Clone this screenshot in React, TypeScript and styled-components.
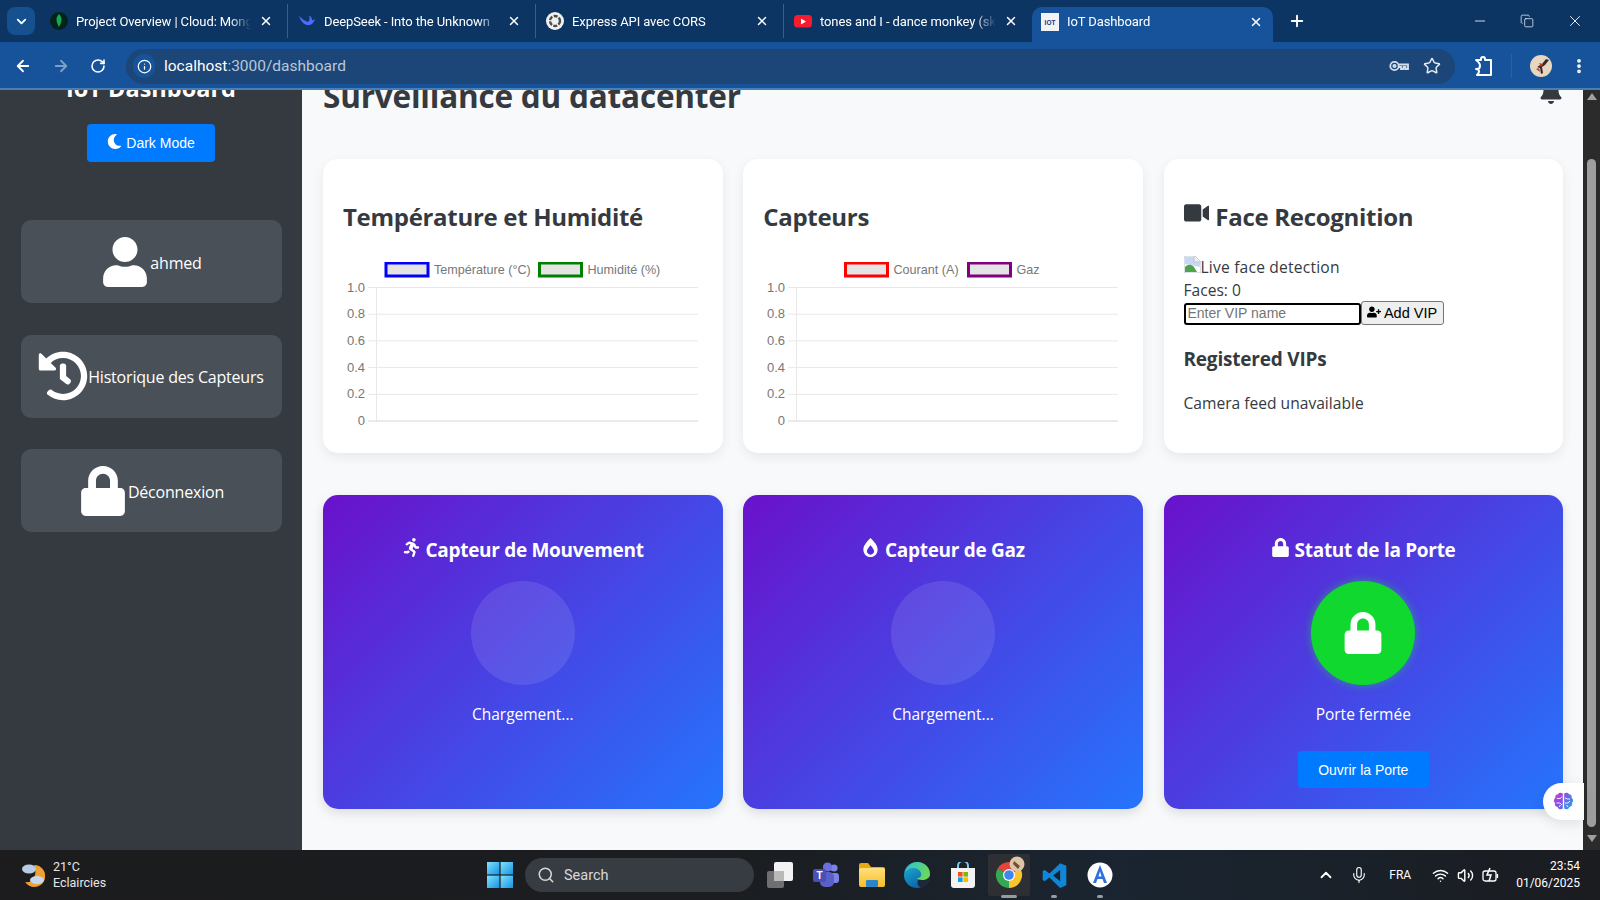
import React from "react";
import styled, { createGlobalStyle } from "styled-components";
import { FaBell, FaBurn, FaHistory, FaLock, FaMoon, FaRunning, FaUser, FaUserPlus, FaVideo } from "react-icons/fa";
import {
    ArrowLeft,
    ArrowRight,
    ChevronDown,
    ChevronUp,
    Copy,
    Info,
    Mic,
    Minus,
    MoreVertical,
    Plus,
    RotateCw,
    Search,
    Star,
    Volume2,
    Wifi,
    X,
} from "lucide-react";

const uiFont = `"Open Sans", "Noto Sans", sans-serif`;
const chromeFont = `Roboto, "Noto Sans", sans-serif`;
const arial = `"Liberation Sans", Arial, sans-serif`;

const GlobalStyle = createGlobalStyle`
    html, body {
        margin: 0;
        height: 100%;
        overflow: hidden;
        background: #f8f9fa;
    }
    * {
        box-sizing: border-box;
    }
`;

const Screen = styled.div`
    width: 1600px;
    height: 900px;
    display: flex;
    flex-direction: column;
    overflow: hidden;
`;

/* browser chrome */
const TabStrip = styled.div`
    height: 42px;
    background: #0c3563;
    display: flex;
    align-items: flex-end;
    padding-left: 7px;
    color: #fff;
    font-family: ${chromeFont};
    font-size: 13px;
`;
const TabMenu = styled.div`
    width: 28px;
    height: 28px;
    margin: 0 5px 7px 0;
    border-radius: 8px;
    background: #16508f;
    display: flex;
    align-items: center;
    justify-content: center;
`;
const Tab = styled.div<{ $active?: boolean; $divider?: boolean }>`
    width: ${(p) => (p.$active ? "241px" : "248px")};
    height: ${(p) => (p.$active ? "35px" : "34px")};
    padding: ${(p) => (p.$active ? "0 10px 6px 9px" : "0 14px 0 10px")};
    margin-bottom: ${(p) => (p.$active ? "0" : "4px")};
    display: flex;
    align-items: center;
    gap: 8px;
    background: ${(p) => (p.$active ? "#16539b" : "transparent")};
    border-radius: ${(p) => (p.$active ? "10px 10px 0 0" : "0")};
    border-right: ${(p) => (p.$divider ? "1px solid #3a5f8c" : "none")};
`;
const TabIcon = styled.span`
    width: 18px;
    height: 18px;
    flex: none;
    display: flex;
`;
const TabTitle = styled.span`
    flex: 1;
    min-width: 0;
    white-space: nowrap;
    overflow: hidden;
    letter-spacing: -0.1px;
    mask-image: linear-gradient(90deg, #000 88%, transparent);
`;
const NewTab = styled.div`
    margin: 0 0 12px 15px;
    display: flex;
`;
const WindowControls = styled.div`
    margin-left: auto;
    align-self: center;
    display: flex;
    align-items: center;
    gap: 32px;
    padding-right: 16px;
`;
const Toolbar = styled.div`
    height: 48px;
    background: #16539b;
    border-bottom: 2px solid #4a7fb5;
    display: flex;
    align-items: center;
    padding: 2px 12px 0 14px;
    color: #fff;
`;
const NavButtons = styled.div`
    display: flex;
    align-items: center;
    gap: 20px;
    width: 112px;
`;
const Omnibox = styled.div`
    width: 1329px;
    height: 35px;
    background: #1c4677;
    border-radius: 18px;
    display: flex;
    align-items: center;
    padding: 0 14px 0 7px;
    font-family: ${chromeFont};
    font-size: 15.5px;
`;
const SiteInfo = styled.span`
    width: 22px;
    height: 24px;
    border-radius: 12px;
    background: #16539b;
    display: flex;
    align-items: center;
    justify-content: center;
    margin-right: 9px;
`;
const Host = styled.span`
    color: #fff;
`;
const UrlPath = styled.span`
    color: #b9c8da;
`;
const OmniActions = styled.div`
    margin-left: auto;
    display: flex;
    align-items: center;
    gap: 14px;
`;
const ToolbarEnd = styled.div`
    flex: 1;
    display: flex;
    align-items: center;
    justify-content: space-between;
    padding: 0 0 0 20px;
`;
const ToolDivider = styled.span`
    width: 1px;
    height: 24px;
    background: #2b6199;
`;

/* page */
const Viewport = styled.div`
    flex: 1;
    min-height: 0;
    display: flex;
    position: relative;
    overflow: hidden;
`;
const Sidebar = styled.aside`
    width: 302px;
    flex: none;
    background: #343a40;
    color: #fff;
    padding: 0 20px;
    display: flex;
    flex-direction: column;
    align-items: center;
`;
const Brand = styled.h2`
    margin: -19px 0 19px;
    height: 34px;
    font-family: ${uiFont};
    font-size: 23.5px;
    font-weight: 700;
    line-height: 34px;
    white-space: nowrap;
`;
const ModeButton = styled.button`
    width: 128px;
    height: 38px;
    border: 0;
    border-radius: 4px;
    background: #007bff;
    color: #fff;
    font-family: ${arial};
    font-size: 14px;
    display: flex;
    align-items: center;
    justify-content: center;
    gap: 4px;
    margin-bottom: 58px;
    svg {
        margin-bottom: 3px;
    }
`;
const NavList = styled.nav`
    width: 261px;
    display: flex;
    flex-direction: column;
    gap: 31.5px;
`;
const NavItem = styled.div`
    height: 83px;
    background: #495057;
    border-radius: 10px;
    display: flex;
    align-items: center;
    justify-content: center;
    font-family: ${uiFont};
    font-size: 16px;
    white-space: nowrap;
    letter-spacing: -0.2px;
`;
const NavLabel = styled.span`
    margin-top: 2px;
`;
const Main = styled.main`
    flex: 1;
    min-width: 0;
    padding: 0 20px 0 21px;
`;
const PageHeader = styled.header`
    height: 69px;
    display: flex;
    justify-content: space-between;
    color: #343a40;
`;
const PageTitle = styled.h1`
    margin: -16px 0 0;
    font-family: ${uiFont};
    font-size: 31.5px;
    line-height: 44px;
    font-weight: 700;
    height: 44px;
    letter-spacing: -0.2px;
`;
const BellSlot = styled.div`
    margin-top: -10px;
    font-size: 24px;
    line-height: 1;
    height: 24px;
`;
const CardGrid = styled.div`
    display: grid;
    grid-template-columns: repeat(3, 399.5px);
    column-gap: 20.75px;
    row-gap: 42px;
`;
const Card = styled.section`
    height: 294px;
    background: #fff;
    border-radius: 15px;
    padding: 20px;
    box-shadow: 0 4px 12px rgba(0, 0, 0, 0.07);
    color: #343a40;
    font-family: ${uiFont};
`;
const CardTitle = styled.h3`
    height: 29px;
    margin: 23px 0 22px;
    font-size: 24px;
    line-height: 29px;
    font-weight: 700;
    letter-spacing: -0.3px;
    white-space: nowrap;
    svg {
        width: 1.08em;
        height: 1.08em;
        margin-top: -6px;
    }
`;
const ChartFrame = styled.svg`
    display: block;
    margin-top: 31px;
    margin-left: 0.5px;
`;
const BrokenLine = styled.div`
    height: 23px;
    margin-top: 24.5px;
    line-height: 23px;
    font-size: 15.6px;
    display: flex;
    align-items: flex-start;
    letter-spacing: 0.2px;
`;
const StatLine = styled.div`
    height: 22px;
    line-height: 22px;
    font-size: 15.6px;
`;
const VipForm = styled.div`
    display: flex;
    align-items: flex-end;
    height: 24px;
`;
const VipInput = styled.input`
    width: 177px;
    height: 22px;
    border: 2px solid #000;
    border-radius: 3px;
    padding: 0 2px 2px;
    font-family: ${arial};
    font-size: 14px;
    background: #fff;
    &::placeholder {
        color: #757575;
    }
`;
const VipButton = styled.button`
    width: 83px;
    height: 24px;
    padding: 0;
    border: 1px solid #767676;
    border-radius: 3px;
    background: #efefef;
    color: #000;
    font-family: ${arial};
    font-size: 14.5px;
    display: flex;
    align-items: center;
    justify-content: center;
    gap: 3px;
    svg {
        margin-bottom: 2px;
    }
`;
const VipTitle = styled.h4`
    margin: 22px 0 21px;
    font-size: 19px;
    line-height: 24px;
    font-weight: 700;
    letter-spacing: -0.2px;
`;
const FeedNote = styled.p`
    margin: 0;
    font-size: 15.6px;
    line-height: 22px;
`;
const SensorCard = styled.section`
    height: 314px;
    border-radius: 15px;
    padding: 43px 20px 0;
    background: linear-gradient(135deg, #6a11cb 0%, #2575fc 100%);
    box-shadow: 0 4px 12px rgba(0, 0, 0, 0.12);
    color: #fff;
    font-family: ${uiFont};
    display: flex;
    flex-direction: column;
    align-items: center;
`;
const SensorTitle = styled.h3`
    margin: 0;
    font-size: 19px;
    line-height: 24px;
    font-weight: 700;
    letter-spacing: -0.3px;
    white-space: nowrap;
`;
const SensorDot = styled.div<{ $on?: boolean }>`
    width: 104px;
    height: 104px;
    margin-top: 19px;
    border-radius: 50%;
    display: flex;
    align-items: center;
    justify-content: center;
    font-size: 42px;
    background: ${(p) => (p.$on ? "#10d82e" : "rgba(255, 255, 255, 0.1)")};
    box-shadow: ${(p) => (p.$on ? "0 0 8px rgba(40, 220, 70, 0.5)" : "none")};
`;
const SensorState = styled.div`
    margin-top: 17px;
    font-size: 15.5px;
    line-height: 24px;
`;
const DoorButton = styled.button`
    width: 131px;
    height: 37px;
    margin-top: 25px;
    border: 0;
    border-radius: 4px;
    background: #007bff;
    color: #fff;
    font-family: ${arial};
    font-size: 14px;
`;
const ScrollTrack = styled.div`
    width: 17px;
    flex: none;
    background: #2b2b2b;
    display: flex;
    flex-direction: column;
    align-items: center;
    padding: 3px 0;
`;
const ScrollThumb = styled.div`
    width: 9px;
    height: 668px;
    margin: 59px 0 8px;
    border-radius: 5px;
    background: #9f9f9f;
`;
const ScrollArrow = styled.div<{ $down?: boolean }>`
    width: 0;
    height: 0;
    border-left: 5px solid transparent;
    border-right: 5px solid transparent;
    border-bottom: ${(p) => (p.$down ? "0" : "7px solid #9f9f9f")};
    border-top: ${(p) => (p.$down ? "7px solid #9f9f9f" : "0")};
`;
const AssistantTab = styled.div`
    position: absolute;
    right: 16px;
    top: 693px;
    width: 41px;
    height: 37px;
    border-radius: 19px 0 0 19px;
    background: #fff;
    box-shadow: 0 4px 14px rgba(0, 0, 0, 0.1);
    display: flex;
    align-items: center;
    justify-content: center;
`;

/* windows taskbar */
const Taskbar = styled.footer`
    height: 50px;
    flex: none;
    background: linear-gradient(90deg, #1c1c1e 0%, #1b1d20 45%, #1a2531 70%, #1a1c20 100%);
    display: flex;
    align-items: center;
    color: #fff;
    font-family: ${chromeFont};
`;
const Weather = styled.div`
    width: 487px;
    padding-left: 20px;
    display: flex;
    align-items: center;
    gap: 8px;
    font-size: 12.5px;
    line-height: 16px;
`;
const WeatherText = styled.div`
    color: #e6e6e6;
`;
const StartSlot = styled.div`
    width: 38px;
    display: flex;
`;
const SearchBox = styled.div`
    width: 229px;
    height: 34px;
    margin-right: 3.5px;
    border-radius: 17px;
    background: #373c43;
    display: flex;
    align-items: center;
    gap: 9px;
    padding-left: 12px;
    font-size: 14.5px;
    color: #d8d8d8;
`;
const TaskSlot = styled.div<{ $active?: boolean }>`
    width: 45.7px;
    height: 42px;
    position: relative;
    display: flex;
    align-items: center;
    justify-content: center;
    border-radius: 5px;
    background: ${(p) => (p.$active ? "linear-gradient(#2d2f33, #2d2f33) center / 42px 100% no-repeat" : "transparent")};
`;
const RunDot = styled.span<{ $wide?: boolean }>`
    position: absolute;
    bottom: -2px;
    left: 50%;
    transform: translateX(-50%);
    width: ${(p) => (p.$wide ? "16px" : "6px")};
    height: 3px;
    border-radius: 2px;
    background: #9a9a9a;
`;
const Tray = styled.div`
    margin-left: auto;
    padding-right: 20px;
    display: flex;
    align-items: center;
    font-size: 12px;
`;
const MicSlot = styled.span`
    margin-left: 15px;
    display: flex;
`;
const TrayLang = styled.span`
    margin: 0 21px 0 21px;
`;
const TrayIcons = styled.div`
    display: flex;
    align-items: center;
    gap: 8px;
`;
const Clock = styled.div`
    margin-left: 17px;
    text-align: right;
    line-height: 17px;
`;

const chartTicks = ["1.0", "0.8", "0.6", "0.4", "0.2", "0"];

interface LegendEntry {
    label: string;
    stroke: string;
    x: number;
}

/* same look as the chart.js canvas, empty data */
const EmptyChart: React.FC<{ legend: LegendEntry[] }> = ({ legend }) => (
    <ChartFrame width="360" height="171" viewBox="0 0 360 171">
        {legend.map((item) => (
            <g key={item.label}>
                <rect x={item.x + 1} y={1} width={42} height={13} fill="#e4e4e4" stroke={item.stroke} strokeWidth="3" />
                <text x={item.x + 49} y={12} fontFamily={arial} fontSize="12.6" fill="#777">
                    {item.label}
                </text>
            </g>
        ))}
        <line x1="32.5" y1="25" x2="32.5" y2="159" stroke="#e8e8e8" />
        {chartTicks.map((tick, i) => {
            const y = 25.5 + i * 26.7;
            return (
                <g key={tick}>
                    <line x1="24" y1={y} x2="354" y2={y} stroke={i === 5 ? "#d6d6d6" : "#e8e8e8"} />
                    <text x="21" y={y + 4} textAnchor="end" fontFamily={arial} fontSize="13" fill="#777">
                        {tick}
                    </text>
                </g>
            );
        })}
    </ChartFrame>
);

const BrokenImage: React.FC = () => (
    <svg width="17" height="17" viewBox="0 0 17 17">
        <path d="M0 0h11l6 6v11H0z" fill="#fff" stroke="#bcc6d4" />
        <path d="M1 1h9v5h6v5L1 8z" fill="#c8d8f2" />
        <path d="M1 16v-5c3-3 6-3 9 0l3 5z" fill="#4fa34a" />
        <path d="M10 0v6h7" fill="#eee" stroke="#bcc6d4" />
    </svg>
);

const KeyIcon: React.FC = () => (
    <svg width="20" height="12" viewBox="0 0 20 12" fill="none" stroke="#d5dfeb" strokeWidth="1.8">
        <circle cx="5.5" cy="6" r="4.2" />
        <circle cx="5.5" cy="6" r="1.2" />
        <path d="M9.7 4.5H19v4.5h-2.5V7h-2v2H12V7H9.7" />
    </svg>
);
const ExtensionIcon: React.FC = () => (
    <svg width="18" height="21" viewBox="0 0 18 21" fill="none" stroke="#fff" strokeWidth="2" strokeLinejoin="round">
        <path d="M1 4h5V3a2 2 0 0 1 4 0v1h6v15H2c1-1 2-2 2-3.5S3 13 1 13h1c2 0 3-1 3-3.5S3 5.5 1 4z" />
    </svg>
);
const AvatarImage: React.FC = () => (
    <svg width="22" height="22" viewBox="0 0 22 22">
        <circle cx="11" cy="11" r="11" fill="#e6d8c0" />
        <path d="M7 12l5-3 4-5 3 1-4 5-3 2 1 6-2 1-1-6z" fill="#3b2a26" />
        <path d="M9 8l4 1-2 3zM6 14l3-1 1 4z" fill="#b8423a" />
    </svg>
);
const BrainIcon: React.FC = () => (
    <svg width="21" height="19" viewBox="0 0 21 19">
        <defs>
            <linearGradient id="brainFill" x1="0" y1="0" x2="1" y2="0.6">
                <stop offset="0" stopColor="#e23fc0" />
                <stop offset="0.45" stopColor="#8a4ce8" />
                <stop offset="1" stopColor="#2f9bf0" />
            </linearGradient>
        </defs>
        <path
            d="M9.8 1.5C8 .2 5.8.5 5 2.2 2.8 2.3 1.8 4 2.4 5.8.5 7 .4 9.8 2 11c-.6 2 .6 3.8 2.6 4 .6 2.3 3.4 3 5.2 1.6zM11.2 1.5c1.8-1.3 4-1 4.8.7 2.2.1 3.2 1.8 2.6 3.6 1.9 1.2 2 4 .4 5.2.6 2-.6 3.8-2.6 4-.6 2.3-3.4 3-5.2 1.6z"
            fill="url(#brainFill)"
        />
        <path
            d="M4 6.5h3.5l1.5-2M3.5 11H7l2 2M6 15l1.5-2M12 6l2.5 1H17M12 11h3l2-2M15 15l-1.5-2"
            fill="none"
            stroke="#fff"
            strokeWidth="0.9"
        />
    </svg>
);

const WinLogo: React.FC = () => (
    <svg width="26" height="26" viewBox="0 0 26 26">
        <defs>
            <linearGradient id="winBlue" x1="0" y1="0" x2="1" y2="1">
                <stop offset="0" stopColor="#7fe3fb" />
                <stop offset="1" stopColor="#1593e6" />
            </linearGradient>
        </defs>
        <rect x="0" y="0" width="12.4" height="12.4" fill="url(#winBlue)" />
        <rect x="13.6" y="0" width="12.4" height="12.4" fill="url(#winBlue)" />
        <rect x="0" y="13.6" width="12.4" height="12.4" fill="url(#winBlue)" />
        <rect x="13.6" y="13.6" width="12.4" height="12.4" fill="url(#winBlue)" />
    </svg>
);
const TaskViewIcon: React.FC = () => (
    <svg width="26" height="26" viewBox="0 0 26 26">
        <rect x="0" y="9" width="17" height="17" rx="2" fill="#6f6f6f" />
        <rect x="7" y="0" width="19" height="19" rx="2" fill="#f2f2f2" />
        <rect x="7" y="9" width="10" height="10" fill="#b9b9b9" />
    </svg>
);
const TeamsIcon: React.FC = () => (
    <svg width="26" height="26" viewBox="0 0 26 26">
        <circle cx="21" cy="6" r="3.6" fill="#7b83eb" />
        <circle cx="14.5" cy="5" r="4.6" fill="#6a70d8" />
        <rect x="16" y="11" width="10" height="10" rx="3" fill="#7b83eb" />
        <rect x="7" y="10" width="14" height="15" rx="5" fill="#5b5fc7" />
        <rect x="0" y="7" width="13" height="13" rx="2" fill="#4a4fb5" />
        <text x="6.5" y="17" textAnchor="middle" fontFamily={arial} fontSize="10" fontWeight="700" fill="#fff">
            T
        </text>
    </svg>
);
const FolderIcon: React.FC = () => (
    <svg width="26" height="26" viewBox="0 0 26 26">
        <defs>
            <linearGradient id="folderFill" x1="0" y1="0" x2="0" y2="1">
                <stop offset="0" stopColor="#ffe07a" />
                <stop offset="1" stopColor="#f7bd2c" />
            </linearGradient>
        </defs>
        <path d="M0 3a2 2 0 0 1 2-2h7l3 4h12a2 2 0 0 1 2 2v4H0z" fill="#e8a913" />
        <rect x="0" y="6" width="26" height="19" rx="2" fill="url(#folderFill)" />
        <rect x="7" y="18" width="12" height="7" rx="1" fill="#2b86c9" />
    </svg>
);
const EdgeIcon: React.FC = () => (
    <svg width="26" height="26" viewBox="0 0 26 26">
        <defs>
            <linearGradient id="edgeBlue" x1="0" y1="0" x2="0.6" y2="1">
                <stop offset="0" stopColor="#1fb6d6" />
                <stop offset="1" stopColor="#0c5ea8" />
            </linearGradient>
            <linearGradient id="edgeGreen" x1="0" y1="0" x2="1" y2="0.5">
                <stop offset="0" stopColor="#2fc0d8" />
                <stop offset="1" stopColor="#6ad85a" />
            </linearGradient>
        </defs>
        <circle cx="13" cy="13" r="13" fill="url(#edgeBlue)" />
        <path d="M15 16c3 2 8 1 11-3 0 6-4 11-9 12.5-3-1-5-5-2-9.5z" fill="#1b2a3a" />
        <path d="M1 10C3 4 8 0 13 0c8 0 13 6 13 12 0 4-4 6-8 6-3 0-5-1-5-2 3 0 5-2 4-5-1-3-4-5-8-5-3 0-6 2-8 4z" fill="url(#edgeGreen)" />
    </svg>
);
const StoreIcon: React.FC = () => (
    <svg width="26" height="26" viewBox="0 0 26 26">
        <path d="M8 7V4a5 5 0 0 1 10 0v3" fill="none" stroke="#7fc8ee" strokeWidth="2" />
        <path d="M1 6h24v17a3 3 0 0 1-3 3H4a3 3 0 0 1-3-3z" fill="#f3f3f3" />
        <rect x="8" y="10" width="4.6" height="4.6" fill="#f25022" />
        <rect x="13.4" y="10" width="4.6" height="4.6" fill="#7fba00" />
        <rect x="8" y="15.4" width="4.6" height="4.6" fill="#00a4ef" />
        <rect x="13.4" y="15.4" width="4.6" height="4.6" fill="#ffb900" />
    </svg>
);
const ChromeIcon: React.FC = () => (
    <svg width="26" height="26" viewBox="0 0 26 26" overflow="visible">
        <path d="M13 13L1.7 6.5A13 13 0 0 1 24.3 6.5Z" fill="#e5443a" />
        <path d="M13 13L24.3 6.5A13 13 0 0 1 13 26Z" fill="#f8c52c" />
        <path d="M13 13L13 26A13 13 0 0 1 1.7 6.5Z" fill="#34a853" />
        <circle cx="13" cy="13" r="6" fill="#fff" />
        <circle cx="13" cy="13" r="4.8" fill="#3f86f0" />
        <circle cx="21" cy="2" r="7.5" fill="#dcc6a8" />
        <path d="M18 -1l6 5-2 3-5-5z" fill="#7a4a35" />
    </svg>
);
const CodeIcon: React.FC = () => (
    <svg width="27" height="27" viewBox="0 0 24 24">
        <path d="M17 1 7.5 10.2 3.3 7 1.5 8v8l1.8 1 4.2-3.2L17 23l5.5-2.3V3.3z" fill="#0f86d8" />
        <path d="M17 7 10.8 12 17 17z" fill="#1b2027" />
    </svg>
);
const AssistIcon: React.FC = () => (
    <svg width="26" height="26" viewBox="0 0 26 26">
        <circle cx="13" cy="13" r="12.5" fill="#fff" />
        <path d="M13 3l2 5 5 13h-3l-1.5-4h-5L9 21H6l5-13z" fill="#2f6fe0" />
        <path d="M13 9.5l1.5 5h-3z" fill="#fff" />
    </svg>
);
const WeatherIcon: React.FC = () => (
    <svg width="25" height="26" viewBox="0 0 25 26">
        <path d="M14 3a11 11 0 1 1-9 17c8 2 13-8 9-17z" fill="#f0a030" />
        <ellipse cx="9" cy="7" rx="7" ry="4.5" fill="#b7cde6" />
        <ellipse cx="17" cy="18" rx="7" ry="4" fill="#c6d8ee" />
    </svg>
);
const BatteryIcon: React.FC = () => (
    <svg width="17" height="17" viewBox="0 0 17 17" fill="none" stroke="#fff" strokeWidth="1.3">
        <path d="M3 4h9a2 2 0 0 1 2 2v6a2 2 0 0 1-2 2H3a2 2 0 0 1-2-2V6a2 2 0 0 1 2-2zM15.5 7v4" />
        <path d="M8 1 5 8h4l-2 6" strokeWidth="1.5" />
    </svg>
);

const MongoFavicon: React.FC = () => (
    <svg width="18" height="18" viewBox="0 0 18 18">
        <circle cx="9" cy="9" r="9" fill="#04231a" />
        <path d="M9 2c3 3 3.6 7 0 13-3.6-6-3-10 0-13z" fill="#13aa52" />
    </svg>
);
const DeepSeekFavicon: React.FC = () => (
    <svg width="18" height="18" viewBox="0 0 18 18">
        <path d="M1 4c2 6 6 10 11 9 2-.5 4-3 5-6-1 1-2 1.5-3 1 0-2-1-4-3-4 1 2 1 4-1 6C7 9 4 7 1 4z" fill="#4d6bfe" />
    </svg>
);
const OpenAiFavicon: React.FC = () => (
    <svg width="18" height="18" viewBox="0 0 18 18">
        <circle cx="9" cy="9" r="9" fill="#f1f1f1" />
        <circle cx="9" cy="9" r="5" fill="none" stroke="#4a4a4a" strokeWidth="2.4" strokeDasharray="4 1.4" />
    </svg>
);
const YoutubeFavicon: React.FC = () => (
    <svg width="18" height="18" viewBox="0 0 18 18">
        <rect x="0" y="3" width="18" height="12.5" rx="3.5" fill="#f41c2d" />
        <path d="M7 6.5v6l5-3z" fill="#fff" />
    </svg>
);
const IotFavicon: React.FC = () => (
    <svg width="18" height="18" viewBox="0 0 18 18">
        <rect width="18" height="18" fill="#f1f3f7" />
        <text x="9" y="12" textAnchor="middle" fontFamily={arial} fontSize="6.5" fontWeight="700" fill="#27307c">
            IOT
        </text>
    </svg>
);

const browserTabs = [
    { title: "Project Overview | Cloud: MongoDB", icon: <MongoFavicon /> },
    { title: "DeepSeek - Into the Unknown", icon: <DeepSeekFavicon /> },
    { title: "Express API avec CORS", icon: <OpenAiFavicon /> },
    { title: "tones and I - dance monkey (sketch)", icon: <YoutubeFavicon /> },
];

const App: React.FC = () => (
    <Screen>
        <GlobalStyle />
        <TabStrip>
            <TabMenu>
                <ChevronDown size={15} strokeWidth={3} />
            </TabMenu>
            {browserTabs.map((tab, i) => (
                <Tab key={tab.title} $divider={i < 3}>
                    <TabIcon>{tab.icon}</TabIcon>
                    <TabTitle>{tab.title}</TabTitle>
                    <X size={14} strokeWidth={2.5} />
                </Tab>
            ))}
            <Tab $active>
                <TabIcon>
                    <IotFavicon />
                </TabIcon>
                <TabTitle>IoT Dashboard</TabTitle>
                <X size={14} strokeWidth={2.5} />
            </Tab>
            <NewTab>
                <Plus size={18} strokeWidth={2.5} />
            </NewTab>
            <WindowControls>
                <Minus size={16} strokeWidth={1.2} />
                <Copy size={14} strokeWidth={1.2} />
                <X size={18} strokeWidth={1.2} />
            </WindowControls>
        </TabStrip>
        <Toolbar>
            <NavButtons>
                <ArrowLeft size={18} strokeWidth={2.4} />
                <ArrowRight size={18} strokeWidth={2.4} color="#7e9fc6" />
                <RotateCw size={16} strokeWidth={2.4} />
            </NavButtons>
            <Omnibox>
                <SiteInfo>
                    <Info size={15} strokeWidth={2} />
                </SiteInfo>
                <Host>localhost</Host>
                <UrlPath>:3000/dashboard</UrlPath>
                <OmniActions>
                    <KeyIcon />
                    <Star size={18} strokeWidth={2} color="#e4ebf3" />
                </OmniActions>
            </Omnibox>
            <ToolbarEnd>
                <ExtensionIcon />
                <ToolDivider />
                <AvatarImage />
                <MoreVertical size={18} strokeWidth={3} />
            </ToolbarEnd>
        </Toolbar>
        <Viewport>
            <Sidebar>
                <Brand>IoT Dashboard</Brand>
                <ModeButton>
                    <FaMoon size={15} />
                    Dark Mode
                </ModeButton>
                <NavList>
                    <NavItem>
                        <FaUser size={50} />
                        <NavLabel>ahmed</NavLabel>
                    </NavItem>
                    <NavItem>
                        <FaHistory size={50} />
                        <NavLabel>Historique des Capteurs</NavLabel>
                    </NavItem>
                    <NavItem>
                        <FaLock size={50} />
                        <NavLabel>Déconnexion</NavLabel>
                    </NavItem>
                </NavList>
            </Sidebar>
            <Main>
                <PageHeader>
                    <PageTitle>Surveillance du datacenter</PageTitle>
                    <BellSlot>
                        <FaBell />
                    </BellSlot>
                </PageHeader>
                <CardGrid>
                    <Card>
                        <CardTitle>Température et Humidité</CardTitle>
                        <EmptyChart
                            legend={[
                                { label: "Température (°C)", stroke: "#0000ff", x: 41 },
                                { label: "Humidité (%)", stroke: "#008000", x: 194.5 },
                            ]}
                        />
                    </Card>
                    <Card>
                        <CardTitle>Capteurs</CardTitle>
                        <EmptyChart
                            legend={[
                                { label: "Courant (A)", stroke: "#ff0000", x: 80.5 },
                                { label: "Gaz", stroke: "#800080", x: 203.5 },
                            ]}
                        />
                    </Card>
                    <Card>
                        <CardTitle>
                            <FaVideo /> Face Recognition
                        </CardTitle>
                        <BrokenLine>
                            <BrokenImage />
                            Live face detection
                        </BrokenLine>
                        <StatLine>Faces: 0</StatLine>
                        <VipForm>
                            <VipInput placeholder="Enter VIP name" />
                            <VipButton>
                                <FaUserPlus size={14} />
                                Add VIP
                            </VipButton>
                        </VipForm>
                        <VipTitle>Registered VIPs</VipTitle>
                        <FeedNote>Camera feed unavailable</FeedNote>
                    </Card>
                    <SensorCard>
                        <SensorTitle>
                            <FaRunning /> Capteur de Mouvement
                        </SensorTitle>
                        <SensorDot />
                        <SensorState>Chargement...</SensorState>
                    </SensorCard>
                    <SensorCard>
                        <SensorTitle>
                            <FaBurn /> Capteur de Gaz
                        </SensorTitle>
                        <SensorDot />
                        <SensorState>Chargement...</SensorState>
                    </SensorCard>
                    <SensorCard>
                        <SensorTitle>
                            <FaLock /> Statut de la Porte
                        </SensorTitle>
                        <SensorDot $on>
                            <FaLock />
                        </SensorDot>
                        <SensorState>Porte fermée</SensorState>
                        <DoorButton>Ouvrir la Porte</DoorButton>
                    </SensorCard>
                </CardGrid>
            </Main>
            <ScrollTrack>
                <ScrollArrow />
                <ScrollThumb />
                <ScrollArrow $down />
            </ScrollTrack>
            <AssistantTab>
                <BrainIcon />
            </AssistantTab>
        </Viewport>
        <Taskbar>
            <Weather>
                <WeatherIcon />
                <WeatherText>
                    21°C
                    <br />
                    Eclaircies
                </WeatherText>
            </Weather>
            <StartSlot>
                <WinLogo />
            </StartSlot>
            <SearchBox>
                <Search size={18} strokeWidth={2} />
                Search
            </SearchBox>
            <TaskSlot>
                <TaskViewIcon />
            </TaskSlot>
            <TaskSlot>
                <TeamsIcon />
            </TaskSlot>
            <TaskSlot>
                <FolderIcon />
            </TaskSlot>
            <TaskSlot>
                <EdgeIcon />
            </TaskSlot>
            <TaskSlot>
                <StoreIcon />
            </TaskSlot>
            <TaskSlot $active>
                <ChromeIcon />
                <RunDot $wide />
            </TaskSlot>
            <TaskSlot>
                <CodeIcon />
                <RunDot />
            </TaskSlot>
            <TaskSlot>
                <AssistIcon />
                <RunDot />
            </TaskSlot>
            <Tray>
                <ChevronUp size={18} strokeWidth={2.4} />
                <MicSlot>
                    <Mic size={18} strokeWidth={1.5} />
                </MicSlot>
                <TrayLang>FRA</TrayLang>
                <TrayIcons>
                    <Wifi size={17} />
                    <Volume2 size={17} />
                    <BatteryIcon />
                </TrayIcons>
                <Clock>
                    23:54
                    <br />
                    01/06/2025
                </Clock>
            </Tray>
        </Taskbar>
    </Screen>
);

export default App;
